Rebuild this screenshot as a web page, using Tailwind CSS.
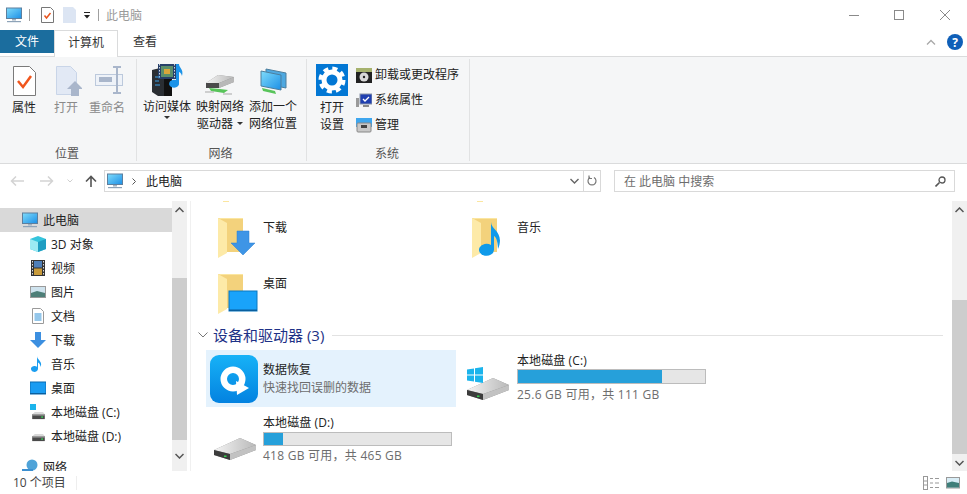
<!DOCTYPE html>
<html lang="zh-CN">
<head>
    <meta charset="UTF-8">
    <title>此电脑</title>
    <script src="https://cdn.jsdelivr.net/npm/@tailwindcss/browser@4"></script>
</head>
<body class="bg-white w-[967px] h-[494px] overflow-hidden text-[12px] leading-[17px] text-[#222] font-['Open_Sans','Noto_Sans_CJK_SC',sans-serif]">
    <!-- shared icons -->
    <svg class="absolute w-0 h-0">
        <defs>
            <linearGradient id="screen" x1="0" y1="0" x2="1" y2="1"><stop offset="0" stop-color="#7fdcfb"/><stop offset="1" stop-color="#1c8fe6"/></linearGradient>
            <linearGradient id="tile" x1="0" y1="0" x2="0" y2="1"><stop offset="0" stop-color="#17b2f7"/><stop offset="1" stop-color="#0382e0"/></linearGradient>
            <linearGradient id="drive" x1="0" y1="0" x2="1" y2="0"><stop offset="0" stop-color="#f4f4f4"/><stop offset="1" stop-color="#b9b9b9"/></linearGradient>
            <symbol id="pc" viewBox="0 0 16 16">
                <rect x="0.5" y="1" width="15" height="10.5" fill="url(#screen)" stroke="#5d7f9e"/>
                <rect x="6" y="12" width="4" height="1.5" fill="#9fb0c0"/>
                <rect x="1" y="14" width="14" height="1.2" fill="#8ea3b8"/>
            </symbol>
            <symbol id="folder" viewBox="0 0 48 48">
                <path d="M4 4h25v34H13z" fill="#f3d27c"/>
                <path d="M4 4l9 5v30l-9 5z" fill="#fdeaa8"/>
                <path d="M4 4h25v1H6z" fill="#fbe6a0"/>
            </symbol>
            <symbol id="hdd" viewBox="0 0 44 24">
                <path d="M1 13L27 1l16 7v5L17 23 1 18z" fill="#8c8c8c"/>
                <path d="M1 13L27 1l16 7-26 9z" fill="url(#drive)"/>
                <path d="M1 13l16 4v6L1 18z" fill="#3c3c3c"/>
                <path d="M17 17l26-9v5L17 23z" fill="#c2c2c2"/>
                <rect x="11" y="18.500" width="2.500" height="1.500" fill="#35d04f"/>
            </symbol>
            <symbol id="hdd-s" viewBox="0 0 16 10">
                <path d="M1 3.500L4 1h9l2 2.500z" fill="#d9d9d9"/>
                <rect x="1" y="3.500" width="14" height="5.500" fill="#4a4a4a"/>
                <rect x="1" y="3.500" width="14" height="1.500" fill="#a8a8a8"/>
                <rect x="11" y="6" width="2" height="1.500" fill="#38d455"/>
            </symbol>
            <symbol id="win" viewBox="0 0 16 16">
                <path d="M0 2.500l7-1v6H0zM8 1.300l8-1.200v7.400H8zM0 8.500h7v6l-7-1zM8 8.500h8v7.400l-8-1.200z" fill="#1bb4ec"/>
            </symbol>
        </defs>
    </svg>

    <!-- title bar -->
    <div class="h-[30px] flex items-center pl-[6px]">
        <svg class="w-[16px] h-[16px]"><use href="#pc"/></svg>
        <div class="w-px h-[12px] bg-[#a0a0a0] ml-[7px]"></div>
        <svg class="w-[13px] h-[16px] ml-[11px]" viewBox="0 0 13 16"><path d="M.5.5h9l3 3v12H.500z" fill="#fff" stroke="#777"/><path d="M3.500 8.500l2 2.500 4-5" fill="none" stroke="#e8541e" stroke-width="1.500"/></svg>
        <svg class="w-[13px] h-[16px] ml-[9px]" viewBox="0 0 13 16"><path d="M0 0h10l3 3v13H0z" fill="#dce5f3"/></svg>
        <svg class="w-[8px] h-[7px] ml-[7px]" viewBox="0 0 8 7"><rect x="1" y="0" width="6" height="1" fill="#222"/><path d="M1 3h6L4 6.500z" fill="#222"/></svg>
        <div class="w-px h-[12px] bg-[#a0a0a0] ml-[7px]"></div>
        <span class="ml-[7px] text-[#9a9a9a]">此电脑</span>
        <div class="ml-auto flex items-center pr-[17px]">
            <div class="w-[10px] h-px bg-[#8a8a8a]"></div>
            <div class="w-[10px] h-[10px] border border-[#8a8a8a] ml-[35px]"></div>
            <svg class="w-[10px] h-[10px] ml-[36px]" viewBox="0 0 10 10"><path d="M0 0l10 10M10 0L0 10" stroke="#8a8a8a" fill="none"/></svg>
        </div>
    </div>

    <!-- tabs -->
    <div class="h-[27px] flex border-b border-[#dadbdc]">
        <div class="w-[54px] h-[23px] bg-[#1b6d9e] text-white flex items-center justify-center">文件</div>
        <div class="w-[64px] h-[27px] bg-white border border-b-0 border-[#dadbdc] flex items-center justify-center text-[#333] pb-[3px]">计算机</div>
        <div class="w-[54px] h-[23px] flex items-center justify-center text-[#333]">查看</div>
        <div class="ml-auto flex items-center gap-[11px] pr-[4px] pb-[2px]">
            <svg class="w-[10px] h-[6px]" viewBox="0 0 10 6"><path d="M1 5.500l4-4 4 4" fill="none" stroke="#a8a8a8" stroke-width="1.300"/></svg>
            <div class="w-[16px] h-[16px] rounded-full bg-[#0f5fb8] text-white flex items-center justify-center text-[12px] font-bold">?</div>
        </div>
    </div>

    <!-- ribbon -->
    <div class="h-[107px] bg-[#f5f6f7] border-b border-[#dadbdc] pt-[2px] flex">
        <div class="w-[137px] h-[102px] border-r border-[#e1e2e3] flex flex-col">
            <div class="flex-1 flex pl-[3px] pt-[5px]">
                <div class="w-[42px] flex flex-col items-center">
                    <svg class="w-[32px] h-[32px]" viewBox="0 0 32 32"><path d="M5.500 2.500h16l6 6v23h-22z" fill="#fff" stroke="#7a7a7a"/><path d="M10 17l5 6 8-11" fill="none" stroke="#f0561d" stroke-width="2.500"/></svg>
                    <span class="mt-[3px]">属性</span>
                </div>
                <div class="w-[42px] flex flex-col items-center text-[#8a8a8a]">
                    <svg class="w-[32px] h-[32px]" viewBox="0 0 32 32"><path d="M6.500 2.500h14l6 6v22h-20z" fill="#e2e9f5" stroke="#c9d5e8"/><path d="M25 17l8 8h-4v7h-8v-7h-4z" fill="#a9b6cb"/></svg>
                    <span class="mt-[3px]">打开</span>
                </div>
                <div class="w-[40px] flex flex-col items-center text-[#8a8a8a]">
                    <svg class="w-[32px] h-[32px]" viewBox="0 0 32 32"><rect x="4.500" y="10.500" width="27" height="11" fill="#eef2f8" stroke="#bcc9dc"/><rect x="8" y="13" width="13" height="5" fill="#a9b6cb"/><path d="M22 3h8M22 29h8M26 3v26" fill="none" stroke="#a9b6cb" stroke-width="2"/></svg>
                    <span class="mt-[3px] whitespace-nowrap">重命名</span>
                </div>
            </div>
            <div class="h-[18px] pt-[2px] pr-[2px] text-center text-[#555]">位置</div>
        </div>
        <div class="w-[170px] h-[102px] border-r border-[#e1e2e3] flex flex-col">
            <div class="flex-1 flex pl-[5px] pt-[4px]">
                <div class="w-[50px] flex flex-col items-center">
                    <svg class="w-[34px] h-[33px]" viewBox="0 0 34 33">
                        <path d="M2 7l12-3v29H8L2 29z" fill="#2a2e33"/>
                        <path d="M14 4l8 3v26h-8z" fill="#111"/>
                        <rect x="8" y="1" width="18" height="15" fill="#27406a"/>
                        <rect x="11" y="3" width="12" height="11" fill="#5c8f6a"/>
                        <rect x="14" y="6" width="6" height="5" fill="#d9a63a"/>
                        <path d="M9.500 1v15M24.500 1v15" stroke="#cfd6e0" stroke-dasharray="1.500 1.500"/>
                        <path d="M29 1c0 4 5 5 3 12-1-3-2-4-3-4v11a5 4 0 1 1-3-3V1z" fill="#1b93e8"/>
                        <path d="M5 14h5M5 18h4M5 22h5" stroke="#3aa0e8"/>
                    </svg>
                    <span class="whitespace-nowrap mt-[2px]">访问媒体</span>
                    <div class="w-0 h-0 border-x-[3px] border-x-transparent border-t-[3px] border-t-[#333] mt-[1px]"></div>
                </div>
                <div class="w-[50px] ml-[3px] flex flex-col items-center">
                    <svg class="w-[32px] h-[33px]" viewBox="0 0 32 33">
                        <path d="M2 20L14 12l16 2v5L15 25 2 24z" fill="#8c8c8c"/>
                        <path d="M2 20L14 12l16 2-15 6z" fill="url(#drive)"/>
                        <path d="M2 20l13 0v5H2z" fill="#4a4a4a"/>
                        <path d="M15 20l15-6v5l-15 6z" fill="#b8b8b8"/>
                        <path d="M5 25l11 1 8 1-4 3-13-2z" fill="#58c45a"/>
                        <path d="M1 29h9M19 31h9" stroke="#a7a7a7"/>
                    </svg>
                    <span class="whitespace-nowrap mt-[2px]">映射网络</span>
                    <span class="whitespace-nowrap flex items-center gap-[4px]">驱动器<span class="w-0 h-0 border-x-[3px] border-x-transparent border-t-[3px] border-t-[#333]"></span></span>
                </div>
                <div class="w-[50px] ml-[3px] flex flex-col items-center">
                    <svg class="w-[32px] h-[33px]" viewBox="0 0 32 33">
                        <path d="M9 6l20 4v15L9 21z" fill="#4ea8e0" stroke="#4d7f9e"/>
                        <path d="M4 8l20 4v15L4 23z" fill="url(#screen)" stroke="#4d7f9e"/>
                        <path d="M5 25l13 3 1 3-13-3z" fill="#58c45a"/>
                    </svg>
                    <span class="whitespace-nowrap mt-[2px]">添加一个</span>
                    <span class="whitespace-nowrap">网络位置</span>
                </div>
            </div>
            <div class="h-[18px] pt-[2px] pr-[2px] text-center text-[#555]">网络</div>
        </div>
        <div class="w-[163px] h-[102px] border-r border-[#e1e2e3] flex flex-col">
            <div class="flex-1 flex pl-[9px]">
                <div class="w-[32px] pt-[5px] flex flex-col items-center">
                    <svg class="w-[32px] h-[32px]" viewBox="0 0 32 32">
                        <rect width="32" height="32" fill="#0277d4"/>
                        <circle cx="16" cy="16" r="8" fill="none" stroke="#fff" stroke-width="5"/>
                        <circle cx="16" cy="16" r="11.500" fill="none" stroke="#fff" stroke-width="4" stroke-dasharray="5 4.030"/>
                    </svg>
                    <span class="mt-[3px] whitespace-nowrap">打开</span>
                    <span class="whitespace-nowrap">设置</span>
                </div>
                <div class="ml-[8px] pt-[3px] flex flex-col">
                    <div class="h-[25px] flex items-center gap-[3px] whitespace-nowrap">
                        <svg class="w-[16px] h-[16px]" viewBox="0 0 16 16"><rect y="1" width="16" height="15" fill="#222"/><rect y="1" width="16" height="4" fill="#a6b26e"/><circle cx="8" cy="10" r="4.500" fill="#d8d8d8"/><circle cx="8" cy="10" r="1.200" fill="#222"/></svg>
                        <span>卸载或更改程序</span>
                    </div>
                    <div class="h-[25px] flex items-center gap-[3px] whitespace-nowrap">
                        <svg class="w-[16px] h-[16px]" viewBox="0 0 16 16"><rect x="0" y="6" width="3" height="9" fill="#9a9a9a"/><rect x="4" y="2" width="12" height="10" fill="#1f3fb0" stroke="#8a94a8"/><path d="M7 7l2 2 4-4" fill="none" stroke="#fff" stroke-width="1.300"/><rect x="7" y="13" width="6" height="2" fill="#8a8a8a"/></svg>
                        <span>系统属性</span>
                    </div>
                    <div class="h-[25px] flex items-center gap-[3px] whitespace-nowrap">
                        <svg class="w-[16px] h-[16px]" viewBox="0 0 16 16"><rect y="1" width="16" height="9" fill="#3ea6ee"/><rect x="1" y="6" width="14" height="9" rx="1" fill="#c8c8c8" stroke="#888"/><rect x="5" y="8" width="6" height="3" fill="#444"/></svg>
                        <span>管理</span>
                    </div>
                </div>
            </div>
            <div class="h-[18px] pt-[2px] pr-[2px] text-center text-[#555]">系统</div>
        </div>
    </div>

    <!-- address bar -->
    <div class="h-[37px] flex items-start pt-[6px]">
        <div class="w-[104px] h-[22px] flex items-center">
            <svg class="w-[14px] h-[10px] ml-[10px]" viewBox="0 0 14 10"><path d="M6 .500L1.500 5 6 9.500M1.500 5H14" fill="none" stroke="#d3d3d3" stroke-width="1.500"/></svg>
            <svg class="w-[14px] h-[10px] ml-[16px]" viewBox="0 0 14 10"><path d="M8 .500L12.500 5 8 9.500M12.500 5H0" fill="none" stroke="#d3d3d3" stroke-width="1.500"/></svg>
            <svg class="w-[6px] h-[4px] ml-[13px]" viewBox="0 0 6 4"><path d="M.5.500L3 3 5.500.500" fill="none" stroke="#cfcfcf"/></svg>
            <svg class="w-[12px] h-[12px] ml-[12px]" viewBox="0 0 12 12"><path d="M6 12V1.500M1 6.500l5-5 5 5" fill="none" stroke="#555" stroke-width="1.600"/></svg>
        </div>
        <div class="w-[497px] h-[22px] border border-[#d9d9d9] flex items-center">
            <svg class="w-[16px] h-[16px] ml-[2px]"><use href="#pc"/></svg>
            <svg class="w-[4px] h-[7px] ml-[9px]" viewBox="0 0 4 7"><path d="M.5.500l3 3-3 3" fill="none" stroke="#555"/></svg>
            <span class="ml-[10px]">此电脑</span>
            <svg class="w-[9px] h-[6px] ml-auto mr-[4px]" viewBox="0 0 9 6"><path d="M.500 1L4.500 5l4-4" fill="none" stroke="#666" stroke-width="1.400"/></svg>
            <div class="w-[17px] h-full border-l border-[#d9d9d9] flex items-center justify-center">
                <svg class="w-[10px] h-[12px]" viewBox="0 0 10 12"><path d="M3 2.500a4 4 0 1 0 4 0M2 .500v3h3" fill="none" stroke="#777" stroke-width="1.200"/></svg>
            </div>
        </div>
        <div class="w-[341px] h-[22px] ml-[13px] border border-[#d9d9d9] flex items-center pl-[9px] pr-[8px] text-[#6d6d6d]">
            <span>在 此电脑 中搜索</span>
            <svg class="w-[11px] h-[11px] ml-auto" viewBox="0 0 11 11"><circle cx="7" cy="4" r="3" fill="none" stroke="#555" stroke-width="1.300"/><path d="M4.500 6.500L.5 10.500" stroke="#555" stroke-width="1.600"/></svg>
        </div>
    </div>

    <!-- body -->
    <div class="h-[270px] flex overflow-hidden">
        <!-- nav pane -->
        <div class="w-[172px] pt-[7px] overflow-hidden">
            <div class="h-[24px] bg-[#d9d9d9] flex items-center pl-[22px] gap-[5px]"><svg class="w-[16px] h-[16px]"><use href="#pc"/></svg><span>此电脑</span></div>
            <div class="h-[24px] flex items-center pl-[30px] gap-[5px]">
                <svg class="w-[16px] h-[16px]" viewBox="0 0 16 16"><path d="M8 0l8 3v10l-8 3-8-3V3z" fill="#35c4dc"/><path d="M8 6l8-3v10l-8 3z" fill="#1f9ec2"/><path d="M0 3l8 3v10l-8-3z" fill="#9ceaf3"/></svg>
                <span>3D 对象</span>
            </div>
            <div class="h-[24px] flex items-center pl-[30px] gap-[5px]">
                <svg class="w-[16px] h-[16px]" viewBox="0 0 16 16"><rect x="1" width="14" height="16" fill="#333"/><rect x="4" y="1" width="8" height="6.500" fill="#4f7fb8"/><rect x="4" y="8.500" width="8" height="6.500" fill="#c99b3a"/><path d="M2.500 1v14M13.500 1v14" stroke="#ddd" stroke-dasharray="1.500 1.500"/></svg>
                <span>视频</span>
            </div>
            <div class="h-[24px] flex items-center pl-[30px] gap-[5px]">
                <svg class="w-[16px] h-[16px]" viewBox="0 0 16 16"><rect x=".5" y="2.500" width="15" height="11" fill="#cfe3ee" stroke="#9a9a9a"/><path d="M1 9l6-2 8 2v4H1z" fill="#4e7f78"/></svg>
                <span>图片</span>
            </div>
            <div class="h-[24px] flex items-center pl-[30px] gap-[5px]">
                <svg class="w-[16px] h-[16px]" viewBox="0 0 16 16"><path d="M2.500.500h8l3 3v12h-11z" fill="#fff" stroke="#9a9a9a"/><path d="M4.500 6h7M4.500 8h7M4.500 10h7M4.500 12h7" stroke="#2b8fd6"/></svg>
                <span>文档</span>
            </div>
            <div class="h-[24px] flex items-center pl-[30px] gap-[5px]">
                <svg class="w-[16px] h-[16px]" viewBox="0 0 16 16"><path d="M5 0h6v8h5l-8 8-8-8h5z" fill="#3c8fe0"/></svg>
                <span>下载</span>
            </div>
            <div class="h-[24px] flex items-center pl-[30px] gap-[5px]">
                <svg class="w-[16px] h-[16px]" viewBox="0 0 16 16"><path d="M7 0c0 4 6 5 3.500 11-.3-3-1.500-4-2.500-4.500V13a3.500 3 0 1 1-1-2.200z" fill="#1b9ef0"/></svg>
                <span>音乐</span>
            </div>
            <div class="h-[24px] flex items-center pl-[30px] gap-[5px]">
                <svg class="w-[16px] h-[16px]" viewBox="0 0 16 16"><rect y="2" width="16" height="12" fill="#1a9cf2" stroke="#0a6bb0"/><rect x="0" y="13" width="16" height="1" fill="#0a5f9e"/></svg>
                <span>桌面</span>
            </div>
            <div class="h-[24px] flex items-center pl-[30px] gap-[5px]">
                <svg class="w-[16px] h-[16px]" viewBox="0 0 16 16"><rect x="0" y="0" width="6" height="6" fill="#1bb4ec"/><use href="#hdd-s" x="1" y="7" width="15" height="9"/></svg>
                <span>本地磁盘 (C:)</span>
            </div>
            <div class="h-[24px] flex items-center pl-[30px] gap-[5px]">
                <svg class="w-[16px] h-[16px]" viewBox="0 0 16 16"><use href="#hdd-s" x="1" y="5" width="15" height="9"/></svg>
                <span>本地磁盘 (D:)</span>
            </div>
            <div class="h-[24px] mt-[7px] flex items-center pl-[22px] gap-[5px]">
                <svg class="w-[16px] h-[16px]" viewBox="0 0 16 16"><circle cx="10" cy="6" r="5.500" fill="#4fa3d8"/><rect y="10" width="11" height="6" fill="#3c8fd0"/></svg>
                <span>网络</span>
            </div>
        </div>

        <!-- nav scrollbar -->
        <div class="w-[15px] bg-[#f0f0f0] flex flex-col">
            <div class="h-[17px] flex items-center justify-center"><svg class="w-[9px] h-[6px]" viewBox="0 0 9 6"><path d="M.500 5l4-4 4 4" fill="none" stroke="#555" stroke-width="1.500"/></svg></div>
            <div class="h-[60px]"></div>
            <div class="h-[162px] bg-[#cdcdcd]"></div>
            <div class="flex-1 flex items-center justify-center"><svg class="w-[9px] h-[6px]" viewBox="0 0 9 6"><path d="M.500 1l4 4 4-4" fill="none" stroke="#555" stroke-width="1.500"/></svg></div>
        </div>

        <!-- content -->
        <div class="w-[762px] ml-[3px] border-l border-[#f0f0f0] overflow-hidden pl-[15px]">
            <div class="h-[1px] flex">
                <div class="w-[6px] ml-[17px] bg-[#fbe6a0]"></div>
                <div class="w-[6px] ml-[248px] bg-[#fbe6a0]"></div>
            </div>
            <div class="mt-[12px] h-[48px] flex">
                <div class="w-[254px] flex pl-[8px]">
                    <svg class="w-[48px] h-[48px]" viewBox="0 0 48 48"><use href="#folder" width="48" height="48"/><path d="M23 17h12v12h6L29 41 17 29h6z" fill="#3e95e6" stroke="#2a7fd0" stroke-width=".5"/></svg>
                    <span class="ml-[1px] mt-[5px]">下载</span>
                </div>
                <div class="flex pl-[8px]">
                    <svg class="w-[48px] h-[48px]" viewBox="0 0 48 48"><use href="#folder" width="48" height="48"/><path d="M23 8c0 8 14 10 7 27-.5-9-2-12-4-13v14a7.500 6 0 1 1-3-5z" fill="#0f9aea"/></svg>
                    <span class="ml-[1px] mt-[5px]">音乐</span>
                </div>
            </div>
            <div class="mt-[8px] h-[48px] flex pl-[8px]">
                <svg class="w-[48px] h-[48px]" viewBox="0 0 48 48"><use href="#folder" width="48" height="48"/><rect x="15" y="21" width="28" height="20" fill="#19a3fa" stroke="#0a78c0"/><rect x="15" y="39.500" width="28" height="1.500" fill="#0a5f9e"/></svg>
                <span class="ml-[1px] mt-[5px]">桌面</span>
            </div>
            <div class="mt-[8px] h-[18px] flex items-center -ml-[8px]">
                <svg class="w-[10px] h-[6px]" viewBox="0 0 10 6"><path d="M.5.500l4.500 4.500L9.500.500" fill="none" stroke="#777"/></svg>
                <span class="ml-[5px] text-[15px] text-[#1e3287] whitespace-nowrap">设备和驱动器 (3)</span>
                <div class="ml-[8px] w-[611px] h-px bg-[#e2e2e2]"></div>
            </div>
            <div class="mt-[6px] grid grid-cols-[250px_250px] gap-x-[4px]">
                <div class="h-[57px] bg-[#e4f2fd] flex items-center pl-[4px]">
                    <svg class="w-[48px] h-[48px]" viewBox="0 0 48 48">
                        <rect width="48" height="48" rx="9" fill="url(#tile)"/>
                        <circle cx="23" cy="24" r="9.250" fill="none" stroke="#fff" stroke-width="6.500"/>
                        <path d="M26 26l13 7-12 7z" fill="#fff"/>
                    </svg>
                    <div class="ml-[5px]">
                        <div class="h-[18px]">数据恢复</div>
                        <div class="h-[18px] text-[#6d6d6d]">快速找回误删的数据</div>
                    </div>
                </div>
                <div class="h-[57px] flex pl-[6px]">
                    <svg class="w-[45px] h-[36px] mt-[17px]" viewBox="0 0 45 36"><use href="#hdd" x="0" y="10" width="44" height="24"/><use href="#win" x="1" y="0" width="16" height="16"/></svg>
                    <div class="ml-[6px] flex flex-col">
                        <div class="h-[15px] mt-[2px] tracking-[0.1px]">本地磁盘 (C:)</div>
                        <div class="w-[189px] h-[15px] mt-[2px] bg-[#e6e6e6] border border-[#bcbcbc]"><div class="h-full bg-[#26a0da]" style="width: 77%"></div></div>
                        <div class="mt-[2px] text-[#6d6d6d] tracking-[0.25px]">25.6 GB 可用，共 111 GB</div>
                    </div>
                </div>
                <div class="h-[57px] flex pl-[7px]">
                    <svg class="w-[44px] h-[24px] mt-[30px]"><use href="#hdd"/></svg>
                    <div class="ml-[6px] flex flex-col">
                        <div class="h-[15px] mt-[7px] tracking-[0.1px]">本地磁盘 (D:)</div>
                        <div class="w-[189px] h-[15px] mt-[3px] bg-[#e6e6e6] border border-[#bcbcbc]"><div class="h-full bg-[#26a0da]" style="width: 10%"></div></div>
                        <div class="mt-[1px] text-[#6d6d6d] tracking-[0.25px]">418 GB 可用，共 465 GB</div>
                    </div>
                </div>
            </div>
        </div>

        <!-- main scrollbar -->
        <div class="w-[15px] bg-[#f0f0f0] flex flex-col shrink-0">
            <div class="h-[17px] flex items-center justify-center"><svg class="w-[9px] h-[6px]" viewBox="0 0 9 6"><path d="M.500 5l4-4 4 4" fill="none" stroke="#555" stroke-width="1.500"/></svg></div>
            <div class="h-[82px]"></div>
            <div class="h-[154px] bg-[#cdcdcd]"></div>
            <div class="flex-1 flex items-center justify-center"><svg class="w-[9px] h-[6px]" viewBox="0 0 9 6"><path d="M.500 1l4 4 4-4" fill="none" stroke="#555" stroke-width="1.500"/></svg></div>
        </div>
    </div>

    <!-- status bar -->
    <div class="h-[23px] flex items-center pl-[13px] text-[#444]">
        <span class="w-[63px]">10 个项目</span>
        <div class="w-px h-[14px] bg-[#eee]"></div>
        <div class="ml-auto flex items-center gap-[7px] pr-[7px]">
            <svg class="w-[16px] h-[14px]" viewBox="0 0 16 14"><rect x=".5" y=".5" width="4" height="13" fill="none" stroke="#999"/><path d="M.5 5h4M.5 9h4" stroke="#999"/><path d="M7 2.500h3M12 2.500h4M7 7h3M12 7h4M7 11.500h3M12 11.500h4" stroke="#999"/></svg>
            <svg class="w-[14px] h-[14px]" viewBox="0 0 14 14"><rect x=".5" y="1.500" width="13" height="10.500" fill="#d8edf6" stroke="#999"/><path d="M1 7l5-1.500L13 7v4.500H1z" fill="#3f7f7a"/></svg>
        </div>
    </div>
</body>
</html>
